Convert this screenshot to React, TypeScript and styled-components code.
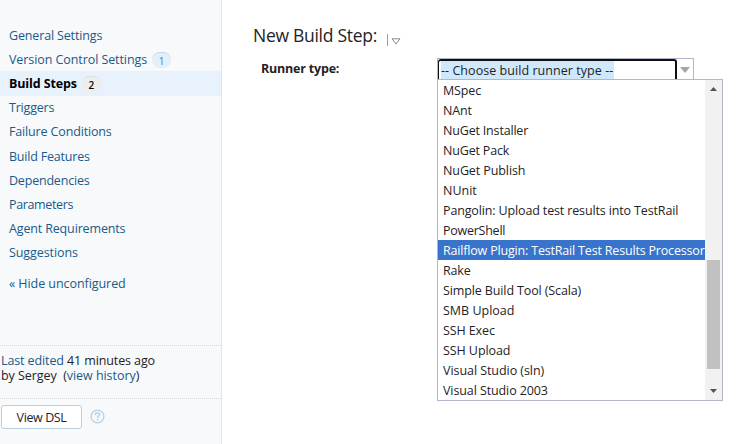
import React from 'react';
import styled, { createGlobalStyle } from 'styled-components';

const GlobalStyle = createGlobalStyle`
  * { box-sizing: border-box; }
  body {
    margin: 0;
    overflow: hidden;
    background: #fff;
    color: #1f2326;
    font: 12.5px/20px "Open Sans", "Noto Sans", sans-serif;
  }
`;

const Page = styled.div`
  display: flex;
  width: 740px;
  height: 444px;
`;

const Sidebar = styled.aside`
  width: 222px;
  flex: none;
  background: #f7f9fa;
  border-right: 1px solid #dfe5eb;
  padding-top: 23px;
  display: flex;
  flex-direction: column;
  color: #1f2326;
`;

const Nav = styled.nav`
  display: flex;
  flex-direction: column;
`;

const NavItem = styled.a<{ $active?: boolean }>`
  display: flex;
  align-items: center;
  height: 24.2px;
  padding: 1px 0 0 9px;
  white-space: nowrap;
  color: ${p => (p.$active ? '#000' : '#1a5a8a')};
  font-weight: ${p => (p.$active ? 700 : 400)};
  background: ${p => (p.$active ? '#e7f2fc' : 'transparent')};
`;

const Label = styled.span<{ $spacing?: number }>`
  letter-spacing: ${p => p.$spacing ?? 0}px;
  white-space: nowrap;
`;

const Count = styled.span<{ $active?: boolean }>`
  margin-left: 5px;
  width: 19px;
  height: 16px;
  border-radius: 8px;
  font-size: 10px;
  font-weight: ${p => (p.$active ? 600 : 400)};
  line-height: 16px;
  text-align: center;
  color: ${p => (p.$active ? '#000' : '#3f7fc4')};
  background: ${p => (p.$active ? '#eeeeee' : '#e5eff9')};
  border-top: 1px solid ${p => (p.$active ? '#dcdcdc' : '#c5d9ee')};
`;

const HideLink = styled.a`
  margin-top: 9px;
  padding-left: 9px;
  height: 20px;
  color: #1a5a8a;
`;

const Edited = styled.div`
  margin-top: 51px;
  height: 54px;
  padding: 7px 0 0 1px;
  border-top: 1px dotted #d3d9df;
  border-bottom: 1px dotted #d3d9df;
  line-height: 15px;
`;

const Line = styled.div<{ $spacing: number }>`
  white-space: pre;
  letter-spacing: ${p => p.$spacing}px;
`;

const Link = styled.a`
  color: #1a5a8a;
`;

const Actions = styled.div`
  display: flex;
  align-items: center;
  gap: 8px;
  padding: 6px 0 0 1px;
`;

const Button = styled.button`
  width: 81px;
  height: 24px;
  padding: 1px 0 0;
  border: 1px solid #b8d1e5;
  border-radius: 3px;
  background: #fff;
  color: #1f2326;
  font: inherit;
  line-height: 21px;
`;

const Main = styled.main`
  flex: 1;
  padding: 21px 0 0 31px;
`;

const Heading = styled.h2`
  display: flex;
  align-items: center;
  margin: 0;
  height: 28px;
  font-size: 17.5px;
  font-weight: 400;
`;

const HeadingMenu = styled.span`
  display: flex;
  align-items: center;
  gap: 4px;
  height: 12px;
  margin: 10px 0 0 10px;
  padding: 2px 0 0 3px;
  border-left: 1px solid #999;
`;

const Field = styled.div`
  display: flex;
  align-items: flex-start;
  margin-top: 9px;
`;

const FieldLabel = styled.label`
  width: 184px;
  padding: 1px 0 0 8px;
  font-weight: 700;
`;

const Combo = styled.div`
  position: relative;
  display: flex;
  width: 257px;
  height: 22px;
  border: 1px solid #b4b4cc;
`;

const Value = styled.div`
  width: 239px;
  height: 21px;
  padding: 0 0 0 2px;
  border: 2px solid #101010;
  border-left-width: 1px;
  border-bottom: 0;
  border-radius: 3px 3px 0 0;
`;

const Selected = styled.span`
  display: block;
  width: 173px;
  height: 18px;
  line-height: 19px;
  background: #cfe8fc;
  white-space: nowrap;
`;

const Toggle = styled.span`
  flex: 1;
  display: flex;
  justify-content: center;
  padding-top: 8px;
`;

const Menu = styled.div`
  position: absolute;
  top: 20px;
  left: -1px;
  display: flex;
  width: 286px;
  height: 322px;
  border: 1px solid #b4b4cc;
  background: #fff;
`;

const Options = styled.div`
  flex: 1;
  min-width: 0;
  overflow: hidden;
`;

const Option = styled.div<{ $selected?: boolean }>`
  height: 20px;
  padding-left: 5px;
  line-height: 22px;
  white-space: nowrap;
  color: ${p => (p.$selected ? '#fff' : '#1f2326')};
  background: ${p => (p.$selected ? '#3873cc' : 'transparent')};
`;

const Scrollbar = styled.div`
  width: 17px;
  flex: none;
  display: flex;
  flex-direction: column;
  align-items: center;
  padding: 7px 0;
  background: #f1f1f1;

  > svg:last-child { margin-top: auto; }
`;

const Thumb = styled.div`
  width: 13px;
  height: 109px;
  margin: 169px 0 0 0;
  background: #c1c1c1;
`;

const navItems: { name: string; count?: number; active?: boolean; spacing?: number }[] = [
  { name: 'General Settings', spacing: -0.15 },
  { name: 'Version Control Settings', count: 1, spacing: -0.08 },
  { name: 'Build Steps', count: 2, active: true, spacing: -0.12 },
  { name: 'Triggers', spacing: -0.2 },
  { name: 'Failure Conditions', spacing: -0.15 },
  { name: 'Build Features', spacing: -0.2 },
  { name: 'Dependencies', spacing: -0.2 },
  { name: 'Parameters', spacing: -0.35 },
  { name: 'Agent Requirements', spacing: -0.15 },
  { name: 'Suggestions', spacing: -0.08 },
];

const options: { name: string; selected?: boolean; spacing?: number }[] = [
  { name: 'MSpec', spacing: -0.15 },
  { name: 'NAnt', spacing: -0.15 },
  { name: 'NuGet Installer', spacing: -0.18 },
  { name: 'NuGet Pack', spacing: -0.18 },
  { name: 'NuGet Publish', spacing: -0.1 },
  { name: 'NUnit' },
  { name: 'Pangolin: Upload test results into TestRail', spacing: -0.14 },
  { name: 'PowerShell', spacing: -0.25 },
  { name: 'Railflow Plugin: TestRail Test Results Processor', selected: true, spacing: -0.18 },
  { name: 'Rake', spacing: -0.15 },
  { name: 'Simple Build Tool (Scala)', spacing: -0.12 },
  { name: 'SMB Upload' },
  { name: 'SSH Exec', spacing: -0.1 },
  { name: 'SSH Upload', spacing: -0.08 },
  { name: 'Visual Studio (sln)', spacing: -0.06 },
  { name: 'Visual Studio 2003', spacing: -0.1 },
];

const HelpIcon = () => (
  <svg width="15" height="15" viewBox="0 0 15 15" fill="none" stroke="#b8d1e5">
    <circle cx="7.5" cy="7.5" r="6.4" strokeWidth="1.3" />
    <path d="M5.3 6C5.3 3.2 9.6 3.2 9.6 5.7C9.6 7.2 7.5 7.2 7.5 8.9M7.5 10V11.5" strokeWidth="1.5" />
  </svg>
);

export default function App() {
  return (
    <>
      <GlobalStyle />
      <Page>
        <Sidebar>
          <Nav>
            {navItems.map(i => (
              <NavItem key={i.name} $active={i.active}>
                <Label $spacing={i.spacing}>{i.name}</Label>
                {i.count && <Count $active={i.active}>{i.count}</Count>}
              </NavItem>
            ))}
          </Nav>
          <HideLink><Label $spacing={-0.06}>« Hide unconfigured</Label></HideLink>
          <Edited>
            <Line $spacing={-0.11}><Link>Last edited</Link> 41 minutes ago</Line>
            <Line $spacing={-0.05}>by Sergey  (<Link>view history</Link>)</Line>
          </Edited>
          <Actions>
            <Button><Label $spacing={-0.4}>View DSL</Label></Button>
            <HelpIcon />
          </Actions>
        </Sidebar>
        <Main>
          <Heading>
            <Label $spacing={-0.28}>New Build Step:</Label>
            <HeadingMenu>
              <svg width="10" height="7" viewBox="0 0 10 7" fill="#fff" stroke="#888">
                <path d="M1 .8H9L5 6Z" />
              </svg>
            </HeadingMenu>
          </Heading>
          <Field>
            <FieldLabel><Label $spacing={-0.2}>Runner type:</Label></FieldLabel>
            <Combo>
              <Value><Selected><Label $spacing={0.05}>-- Choose build runner type --</Label></Selected></Value>
              <Toggle>
                <svg width="10" height="6" viewBox="0 0 10 6"><path d="M0 0H10L5 6Z" fill="#a5a5a5" /></svg>
              </Toggle>
              <Menu>
                <Options>
                  {options.map(o => (
                    <Option key={o.name} $selected={o.selected}>
                      <Label $spacing={o.spacing}>{o.name}</Label>
                    </Option>
                  ))}
                </Options>
                <Scrollbar>
                  <svg width="7" height="4" viewBox="0 0 7 4"><path d="M0 4L3.5 0L7 4Z" fill="#505050" /></svg>
                  <Thumb />
                  <svg width="7" height="4" viewBox="0 0 7 4"><path d="M0 0L3.5 4L7 0Z" fill="#505050" /></svg>
                </Scrollbar>
              </Menu>
            </Combo>
          </Field>
        </Main>
      </Page>
    </>
  );
}
